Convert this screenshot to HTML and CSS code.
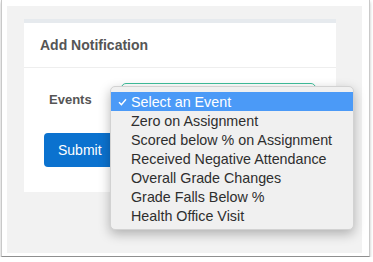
FILE: index.html
```html
<!DOCTYPE html>
<html lang="en">
<head>
    <meta charset="UTF-8">
    <title>Add Notification</title>
    <link rel="stylesheet" href="styles.css">
</head>
<body>
    <div class="frame">
        <div class="canvas">
            <div class="card">
                <div class="card-header">Add Notification</div>
                <div class="card-body">
                    <div class="field">
                        <label class="field-label">Events</label>
                        <div class="select-box"></div>
                    </div>
                    <button class="submit">Submit</button>

                    <ul class="menu">
                        <li class="menu-item selected">
                            <svg class="check" width="9" height="8" viewBox="0 0 9 8">
                                <path d="M1 4.2 L3.4 6.6 L8 1.2" fill="none" stroke="#fff" stroke-width="1.4"/>
                            </svg>
                            Select an Event
                        </li>
                        <li class="menu-item">Zero on Assignment</li>
                        <li class="menu-item">Scored below % on Assignment</li>
                        <li class="menu-item">Received Negative Attendance</li>
                        <li class="menu-item">Overall Grade Changes</li>
                        <li class="menu-item">Grade Falls Below %</li>
                        <li class="menu-item">Health Office Visit</li>
                    </ul>
                </div>
            </div>
        </div>
    </div>
</body>
</html>
```

FILE: styles.css
```css
body {
    margin: 0;
    background-color: #fff;
    font-family: "Liberation Sans", Arial, sans-serif;
}
.frame {
    margin-left: 1px;
    width: 369px;
    height: 257px;
    padding: 6px 7px 0 5px;
    box-sizing: border-box;
    background-color: #fff;
    border: 1px solid #c9c9c9;
    border-top: none;
    border-bottom-color: #8f8f8f;
    box-shadow: 0 2px 3px rgba(0, 0, 0, 0.25);
}
.canvas {
    background-color: #f2f2f2;
    height: 247px;
    padding: 13px 26px 0 17px;
    box-sizing: border-box;
}
.card {
    background-color: #fff;
    border-top: 4px solid #e6eaee;
    height: 173px;
    box-sizing: border-box;
}
.card-header {
    height: 45px;
    box-sizing: border-box;
    padding: 14px 16px 0;
    border-bottom: 1px solid #eeeeee;
    font-size: 14px;
    font-weight: bold;
    color: #555;
}
.card-body {
    position: relative;
    padding: 15px 20px 0;
}
.field {
    display: flex;
    align-items: flex-start;
}
.field-label {
    width: 72px;
    padding: 9px 0 0 5px;
    font-size: 13px;
    font-weight: bold;
    color: #555;
}
.select-box {
    width: 196px;
    height: 30px;
    box-sizing: border-box;
    border: 1.5px solid #3fbf9c;
    border-radius: 5px;
    background-color: #fff;
}
.submit {
    margin-top: 20px;
    height: 34px;
    padding: 0 14px;
    border: none;
    border-radius: 4px;
    background-color: #0b72cf;
    color: #fff;
    font-family: "Liberation Sans", Arial, sans-serif;
    font-size: 14px;
}
.menu {
    position: absolute;
    left: 86px;
    top: 18px;
    width: 244px;
    margin: 0;
    padding: 5px 0 4px;
    box-sizing: border-box;
    list-style: none;
    background-color: #f0f0f0;
    border: 1px solid #d2d2d2;
    border-radius: 5px;
    box-shadow: 0 4px 12px rgba(0, 0, 0, 0.28);
}
.menu-item {
    display: flex;
    align-items: center;
    height: 19px;
    padding-left: 20px;
    font-size: 14.3px;
    color: #2e2e2e;
    position: relative;
}
.menu-item.selected {
    background-color: #4b9af7;
    color: #fff;
}
.check {
    position: absolute;
    left: 7px;
    top: 6px;
}
```
